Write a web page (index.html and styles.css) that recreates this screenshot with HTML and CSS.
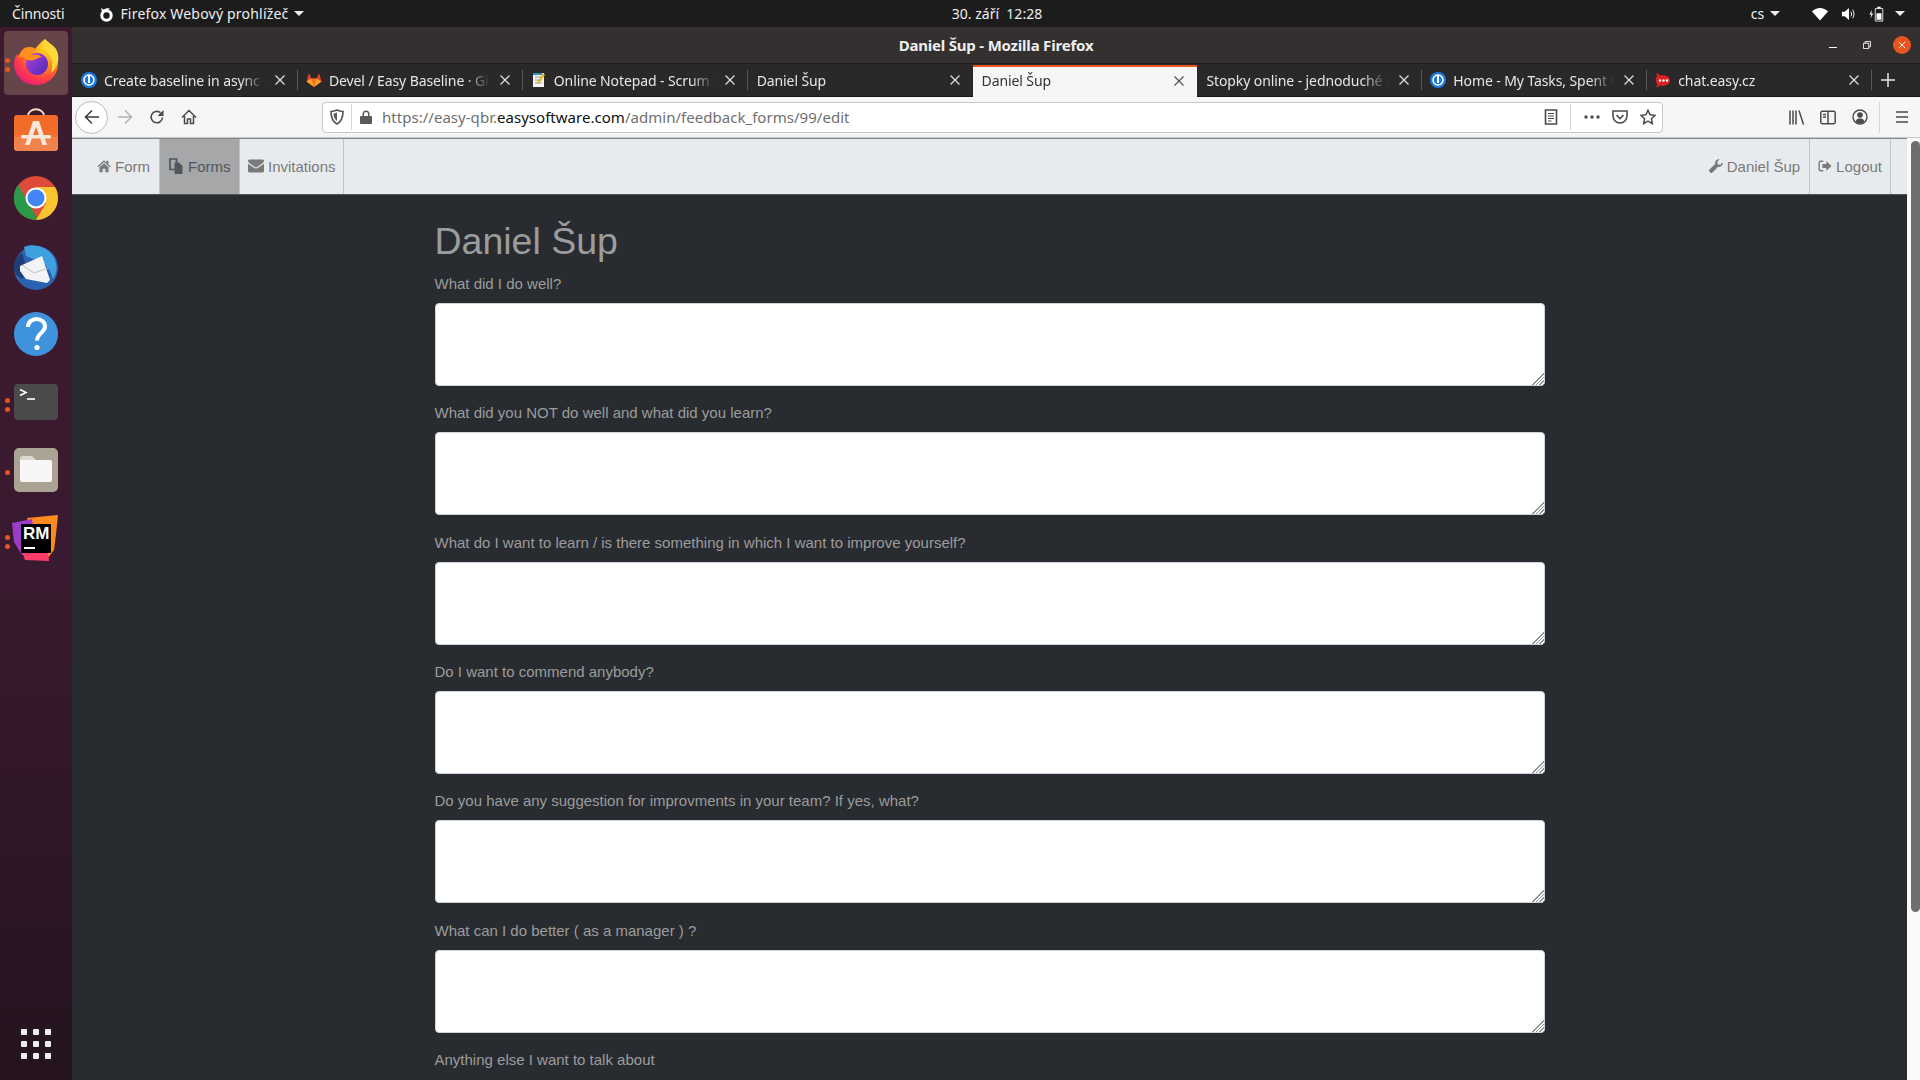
FILE: index.html
```html
<!DOCTYPE html>
<html lang="cs">
<head>
<meta charset="utf-8">
<title>Daniel Šup - Mozilla Firefox</title>
<link rel="stylesheet" href="styles.css">
</head>
<body>
<header class="topbar">
  <span class="activities">Činnosti</span>
  <span class="appmenu">
    <svg class="appicon" viewBox="0 0 16 16"><circle cx="8.500" cy="9.500" r="4.700" fill="none" stroke="#fff" stroke-width="3"/><path fill="#fff" d="M3 1c.5 1.500 1.500 2.300 3 2.500C7.500 2.500 9.500 2 12 2.500 10.500 3 9.800 4 9.500 5.500 7.500 5 5.500 5.500 4.500 7.500 4 6 3.300 3.500 3 1z"/></svg>
    <span>Firefox Webový prohlížeč</span><i class="caret"></i>
  </span>
  <time class="clock">30. září&nbsp; 12:28</time>
  <div class="status">
    <span class="lang">cs <i class="caret"></i></span>
    <svg class="st-wifi" viewBox="0 0 16 14"><path fill="#fff" d="M8 13.500 0 4.500C2.200 2.200 5 1 8 1s5.800 1.200 8 3.500z"/></svg>
    <svg class="st-vol" viewBox="0 0 16 14"><path fill="#fff" d="M1 4.500h3L8.500 .5v13L4 9.500H1z"/><path fill="none" stroke="#fff" d="M10.500 4.500c1 1.500 1 3.500 0 5M12.500 2.500c1.800 2.600 1.800 6.400 0 9"/></svg>
    <svg class="st-bat" viewBox="0 0 18 18"><path fill="#fff" d="M3.500 4 .5 9.500h2.300l-1 5L5 8.500H2.800z"/><path fill="none" stroke="#fff" d="M7.500 2.500h9v15h-9z"/><path fill="#fff" d="M10 .3h4v2.200h-4zM9 8h6v8H9z"/></svg>
    <i class="caret caret-last"></i>
  </div>
</header>

<div class="desktop">
  <nav class="dock">
    <div class="dock-item dock-active">
      <i class="pip pip-a"></i><i class="pip pip-b"></i>
      <svg class="dock-icon" viewBox="0 0 48 48">
        <defs>
          <radialGradient id="ffg" cx=".75" cy=".15" r="1"><stop offset="0" stop-color="#ffe226"/><stop offset=".45" stop-color="#ff8a1c"/><stop offset=".75" stop-color="#ff3a4a"/><stop offset="1" stop-color="#e31587"/></radialGradient>
          <linearGradient id="ffp" x1="0" y1="0" x2="1" y2="1"><stop offset="0" stop-color="#b040d0"/><stop offset="1" stop-color="#4a2bc0"/></linearGradient>
        </defs>
        <path fill="url(#ffg)" d="M33 1c1 4 4 6 7 10 4 5 6 10 6 15 0 12-10 21-22 21C12 47 2 38 2 26c0-4 1-7 3-10l2 2c1-3 3-6 5-8 3-1 7-1 11 1 3-4 6-7 10-10z"/>
        <path fill="#ffd93a" d="M33 1c-3 5-2 9 2 13 5 5 7 12 4 21 7-6 9-14 6-22-2-5-7-7-12-12z"/>
        <circle cx="25" cy="26" r="11" fill="url(#ffp)"/>
        <path fill="#ff8f1f" d="M6 20c2-7 7-11 12-11 3 0 5 1 7 3-3 1-5 3-6 5 4-1 8-1 11 2-3 0-5 2-8 3-4 1-8 0-10-3-2 0-4 0-6 1z"/>
      </svg>
    </div>
    <div class="dock-item">
      <svg class="dock-icon" viewBox="0 0 48 48">
        <defs><linearGradient id="swg" x1="0" y1="0" x2="0" y2="1"><stop offset="0" stop-color="#f26a26"/><stop offset=".6" stop-color="#f26f2c"/><stop offset=".61" stop-color="#f28048"/><stop offset="1" stop-color="#f28450"/></linearGradient></defs>
        <path fill="none" stroke="#f5dcc0" stroke-width="1.800" d="M16 10c0-9 16-9 16 0"/>
        <rect x="2" y="9" width="44" height="36" rx="3" fill="url(#swg)"/>
        <path fill="#f8e8dc" d="M21 15h6l8 24h-4.500L24 21l-6.500 18H13z"/>
        <rect x="9" y="29" width="30" height="3.500" rx="1.500" fill="#f8e8dc"/>
      </svg>
    </div>
    <div class="dock-item">
      <svg class="dock-icon" viewBox="0 0 48 48">
        <circle cx="24" cy="24" r="22" fill="#dd4b39"/>
        <path fill="#2a9a49" d="M24 46A22 22 0 0 1 6 11l11 19 9 16z"/>
        <path fill="#fac52f" d="M24 13h19a22 22 0 0 1-19 33l10-17z"/>
        <circle cx="24" cy="24" r="10.500" fill="#fff"/>
        <circle cx="24" cy="24" r="8.500" fill="#4285f4"/>
      </svg>
    </div>
    <div class="dock-item">
      <svg class="dock-icon" viewBox="0 0 48 48">
        <circle cx="24" cy="26" r="22" fill="#2a62b0"/>
        <path fill="#3fa0e0" d="M12 5c10-5 28 0 32 16 1.500 8-1 13-3 16-2-8-6-13-12-17L14 14z"/>
        <path fill="#1f3f78" d="M2 26c0-7 3-12 8-15l3 9-2 17C5 35 2 31 2 26z"/>
        <path fill="#f3f3f5" d="M8 24 30 14l8 24-3 3-21-4-6-8z"/>
        <path fill="none" stroke="#bcc2cc" stroke-width="1" d="M10 23l12 8 14-5"/>
      </svg>
    </div>
    <div class="dock-item">
      <svg class="dock-icon" viewBox="0 0 48 48">
        <circle cx="24" cy="24" r="22" fill="#3f93dc"/>
        <path fill="none" stroke="#fff" stroke-width="4" d="M16 17c0-5 4-8 8.500-8S33 12 33 16.500c0 6-8 7-8 14"/>
        <circle cx="25" cy="37.500" r="2.600" fill="#fff"/>
      </svg>
    </div>
    <div class="dock-item">
      <i class="pip pip-a"></i><i class="pip pip-b"></i>
      <svg class="dock-icon" viewBox="0 0 48 48">
        <rect x="2" y="6" width="44" height="36" rx="4" fill="#4a4a4a"/>
        <path fill="none" stroke="#fff" stroke-width="1.600" d="M8 11.500l6 3-6 3"/>
        <path fill="none" stroke="#fff" stroke-width="1.600" d="M15 21h8"/>
      </svg>
    </div>
    <div class="dock-item">
      <i class="pip pip-c"></i>
      <svg class="dock-icon" viewBox="0 0 48 48">
        <rect x="2" y="2" width="44" height="44" rx="5" fill="#aba393"/>
        <path fill="#dcd8cf" d="M8 13a3 3 0 0 1 3-3h9l4 4H8z"/>
        <path fill="#f7f6f4" d="M8 14h30a2 2 0 0 1 2 2v18a2 2 0 0 1-2 2H10a2 2 0 0 1-2-2z"/>
      </svg>
    </div>
    <div class="dock-item">
      <i class="pip pip-d"></i><i class="pip pip-e"></i>
      <svg class="dock-icon" viewBox="0 0 48 48">
        <path fill="#ff8a1f" d="M15 4l31-3-2 19-2 16-6 8-10-4z"/>
        <path fill="#9b3cc8" d="M0 9l20-4 4 30-14 6L2 28z"/>
        <path fill="#ff3c6a" d="M8 32l28 6 1 9-24-1z"/>
        <rect x="9" y="10" width="30" height="29" fill="#000"/>
        <text x="11" y="25" class="rm-text">RM</text>
        <rect x="12" y="33" width="11" height="2" fill="#fff"/>
      </svg>
    </div>
    <div class="dock-grid"><i></i><i></i><i></i><i></i><i></i><i></i><i></i><i></i><i></i></div>
  </nav>

  <section class="window">
    <div class="titlebar">
      <span class="title">Daniel Šup - Mozilla Firefox</span>
      <div class="winctl">
        <i class="win-min"></i>
        <svg class="win-max" viewBox="0 0 9 9"><path fill="none" stroke="#fff" d="M.5 2.500h6v6h-6zM2.500 2.500v-2h6v6h-2"/></svg>
        <span class="win-close"><svg viewBox="0 0 10 10"><path stroke="#fff" stroke-width="1.200" d="M1 1l8 8M9 1l-8 8"/></svg></span>
      </div>
    </div>

    <div class="tabstrip">
      <div class="tab sep">
        <svg class="fav" viewBox="0 0 16 16"><circle cx="8" cy="8" r="8" fill="#1a7be0"/><circle cx="8" cy="8" r="5" fill="none" stroke="#fff" stroke-width="1.500"/><path stroke="#fff" stroke-width="2" d="M8 3v8"/></svg>
        <span class="tab-text">Create baseline in async -</span><svg class="tab-x" viewBox="0 0 10 10"><use href="#x"/></svg>
      </div>
      <div class="tab sep">
        <svg class="fav" viewBox="0 0 16 16"><path fill="#e24329" d="M8 15 .5 9.500 3 1l2.500 5.500h5L13 1l2.500 8.500z"/><path fill="#fc6d26" d="M8 15 5.500 6.500h5z"/><path fill="#fca326" d="M.5 9.500 5.500 6.500 8 15zM15.500 9.500 10.500 6.500 8 15z"/></svg>
        <span class="tab-text">Devel / Easy Baseline · Gi</span><svg class="tab-x" viewBox="0 0 10 10"><use href="#x"/></svg>
      </div>
      <div class="tab sep">
        <svg class="fav" viewBox="0 0 16 16"><rect x="2" y="1" width="11" height="14" fill="#f4f4f4"/><path stroke="#999" d="M4 5h7M4 8h7M4 11h7"/><path fill="#e8b820" d="M12 1l2 2-6 8-2 1 .5-2.500z"/><rect x="2" y="1" width="9" height="2" fill="#2f8fc0"/></svg>
        <span class="tab-text">Online Notepad - Scrum n</span><svg class="tab-x" viewBox="0 0 10 10"><use href="#x"/></svg>
      </div>
      <div class="tab">
        <span class="tab-text">Daniel Šup</span><svg class="tab-x" viewBox="0 0 10 10"><use href="#x"/></svg>
      </div>
      <div class="tab tab-active">
        <span class="tab-text">Daniel Šup</span><svg class="tab-x" viewBox="0 0 10 10"><use href="#x"/></svg>
      </div>
      <div class="tab sep">
        <span class="tab-text">Stopky online - jednoduché a</span><svg class="tab-x" viewBox="0 0 10 10"><use href="#x"/></svg>
      </div>
      <div class="tab sep">
        <svg class="fav" viewBox="0 0 16 16"><circle cx="8" cy="8" r="8" fill="#1a7be0"/><circle cx="8" cy="8" r="5" fill="none" stroke="#fff" stroke-width="1.500"/><path stroke="#fff" stroke-width="2" d="M8 3v8"/></svg>
        <span class="tab-text">Home - My Tasks, Spent t</span><svg class="tab-x" viewBox="0 0 10 10"><use href="#x"/></svg>
      </div>
      <div class="tab sep">
        <svg class="fav" viewBox="0 0 16 16"><path fill="#db2323" d="M1 1c2 .5 3 1.500 4 2.500 4-1 10 .5 10 5 0 4.500-6 6-10 5-1 1-2.500 1.500-4 1.500 1-1 1.500-2 1-3.500C0 9.500 0 6 2 4.500 2 3.500 1.500 2 1 1z"/><circle cx="5" cy="8.500" r="1.200" fill="#fff"/><circle cx="8.500" cy="8.500" r="1.200" fill="#fff"/><circle cx="12" cy="8.500" r="1.200" fill="#fff"/></svg>
        <span class="tab-text">chat.easy.cz</span><svg class="tab-x" viewBox="0 0 10 10"><use href="#x"/></svg>
      </div>
      <svg class="newtab" viewBox="0 0 14 14"><path stroke="#e6e6e6" stroke-width="1.500" d="M7 0v14M0 7h14"/></svg>
    </div>

    <div class="toolbar">
      <span class="backbtn"><svg viewBox="0 0 16 16"><path fill="none" stroke="#3a3a3a" stroke-width="1.500" d="M15 8H1.500M8 1.500 1.500 8 8 14.500"/></svg></span>
      <svg class="tool tool-fwd" viewBox="0 0 16 16"><path fill="none" stroke="#b4b4b4" stroke-width="1.500" d="M1 8h13.500M8 1.500 14.500 8 8 14.500"/></svg>
      <svg class="tool tool-reload" viewBox="0 0 16 16"><path fill="none" stroke="#4a4a4a" stroke-width="1.600" d="M13.500 8.500a5.700 5.700 0 1 1-2-4.800"/><path fill="#4a4a4a" d="M14.500 1v6h-6z"/></svg>
      <svg class="tool tool-home" viewBox="0 0 16 16"><path fill="none" stroke="#4a4a4a" stroke-width="1.500" d="M1 8.500 8 1.500l7 7M3.500 7v7.500h3V10h3v4.500h3V7"/></svg>
      <div class="urlbar">
        <svg class="u-shield" viewBox="0 0 14 16"><path fill="none" stroke="#5a5a5a" stroke-width="1.700" d="M7 1c2 1 4 1.400 6 1.500 0 6-1.500 10-6 12.500C2.500 12.500 1 8.500 1 2.500 3 2.400 5 2 7 1z"/><path fill="#5a5a5a" d="M7 3.500v8.500C5 10.500 3.800 8.500 3.500 4.500 5 4.400 6 4 7 3.500z"/></svg>
        <i class="u-sep"></i>
        <svg class="u-lock" viewBox="0 0 12 14"><path fill="#5a5a5a" d="M1 6h1.500V4a3.500 3.500 0 0 1 7 0v2H11a1 1 0 0 1 1 1v6a1 1 0 0 1-1 1H1a1 1 0 0 1-1-1V7a1 1 0 0 1 1-1zm3 0h4V4a2 2 0 0 0-4 0z"/></svg>
        <span class="url">https://easy-qbr.<b>easysoftware.com</b>/admin/feedback_forms/99/edit</span>
        <svg class="u-reader" viewBox="0 0 14 16"><path fill="none" stroke="#4a4a4a" stroke-width="1.600" d="M1.500 1h11v14h-11z"/><path stroke="#4a4a4a" stroke-width="1.200" d="M4 4.500h6M4 7h6M4 9.500h6M4 12h3.500"/></svg>
        <i class="u-sep u-sep-r"></i>
        <svg class="u-dots" viewBox="0 0 16 4"><circle cx="2" cy="2" r="1.700" fill="#4a4a4a"/><circle cx="8" cy="2" r="1.700" fill="#4a4a4a"/><circle cx="14" cy="2" r="1.700" fill="#4a4a4a"/></svg>
        <svg class="u-pocket" viewBox="0 0 16 14"><path fill="none" stroke="#4a4a4a" stroke-width="1.600" d="M1 1h14v5a7 7 0 0 1-14 0z"/><path fill="none" stroke="#4a4a4a" stroke-width="1.600" d="M4.500 5 8 8.500 11.500 5"/></svg>
        <svg class="u-star" viewBox="0 0 16 16"><path fill="none" stroke="#4a4a4a" stroke-width="1.500" d="M8 1.200l2.100 4.500 4.900.6-3.600 3.400.9 4.900L8 12.200l-4.300 2.400.9-4.900L1 6.300l4.900-.6z"/></svg>
      </div>
      <div class="tools-right">
        <svg class="tr-lib" viewBox="0 0 16 14"><path stroke="#4a4a4a" stroke-width="1.500" d="M1 0v14M4 0v14M7 0v14M10 0l4.500 14"/></svg>
        <svg class="tr-side" viewBox="0 0 16 14"><path fill="none" stroke="#4a4a4a" stroke-width="1.500" d="M2.500.8h11a1.700 1.700 0 0 1 1.700 1.700v9a1.700 1.700 0 0 1-1.700 1.700h-11A1.700 1.700 0 0 1 .8 11.500v-9A1.700 1.700 0 0 1 2.500.8zM8 .8v12.400M3 4h3M3 6.500h3"/></svg>
        <svg class="tr-acct" viewBox="0 0 16 16"><circle cx="8" cy="8" r="7" fill="none" stroke="#4a4a4a" stroke-width="1.400"/><circle cx="8" cy="6" r="2.800" fill="#4a4a4a"/><path fill="#4a4a4a" d="M3.500 12.500C4.500 10 6 9.500 8 9.500s3.500.5 4.500 3C11 14 9.500 14.500 8 14.500s-3-.5-4.500-2z"/></svg>
        <i class="tr-sep"></i>
        <svg class="tr-menu" viewBox="0 0 14 12"><path stroke="#4a4a4a" stroke-width="1.600" d="M1 1h12M1 6h12M1 11h12"/></svg>
      </div>
    </div>

    <div class="viewport">
      <div class="page">
        <div class="navbar">
          <a class="nav-link nav-home">
            <svg class="ni" viewBox="0 0 16 14"><path fill="currentColor" d="M8 .5 .5 7.200l1 1.100L8 2.500l6.500 5.800 1-1.100L13 5V1h-2.200v2.100zM2.800 8.500V14h3.700v-3.800h3V14h3.700V8.500L8 3.800z"/></svg>Form</a>
          <a class="nav-link nav-active">
            <svg class="ni ni-wide" viewBox="0 0 14 16"><path fill="none" stroke="currentColor" stroke-width="1.700" d="M1 1h6.500v10.500H1z"/><path fill="currentColor" stroke="currentColor" d="M6 5h4l3 3v7.500H6z"/></svg>Forms</a>
          <a class="nav-link nav-inv">
            <svg class="ni ni-wide" viewBox="0 0 16 13"><path fill="currentColor" d="M1.500 0h13A1.500 1.500 0 0 1 16 1.500c0 1-.8 1.800-1.500 2.300L9.200 7.400c-.8.600-1.600.6-2.400 0L1.500 3.800C.8 3.300 0 2.500 0 1.500A1.500 1.500 0 0 1 1.500 0zM0 4.200 6 8.300c1.200.9 2.800.9 4 0l6-4.100v7.300a1.500 1.500 0 0 1-1.500 1.500h-13A1.500 1.500 0 0 1 0 11.500z"/></svg>Invitations</a>
          <a class="nav-link nav-user">
            <svg class="ni" viewBox="0 0 14 14"><path fill="currentColor" d="M13.700 3.300c.3 1.200 0 2.600-1 3.500-1 1-2.300 1.300-3.500 1L3.500 13.500a1.600 1.600 0 0 1-2.200 0l-.8-.8a1.600 1.600 0 0 1 0-2.200L6.200 4.800c-.3-1.200 0-2.500 1-3.500 1-1 2.300-1.300 3.500-1L8.300 2.700l.4 2.600 2.600.4z"/></svg>Daniel Šup</a>
          <a class="nav-link nav-logout">
            <svg class="ni" viewBox="0 0 16 14"><path fill="none" stroke="currentColor" stroke-width="1.600" d="M6 1.500H3A1.700 1.700 0 0 0 1.300 3.200v7.600A1.700 1.700 0 0 0 3 12.500h3"/><path fill="currentColor" d="M5 4.700h4.500V1.500L15.500 7l-6 5.500V9.300H5z"/></svg>Logout</a>
        </div>
        <main class="content">
          <h1 class="heading">Daniel Šup</h1>
          <div class="field"><label class="lbl">What did I do well?</label><textarea class="ta"></textarea></div>
          <div class="field"><label class="lbl">What did you NOT do well and what did you learn?</label><textarea class="ta"></textarea></div>
          <div class="field"><label class="lbl">What do I want to learn / is there something in which I want to improve yourself?</label><textarea class="ta"></textarea></div>
          <div class="field"><label class="lbl">Do I want to commend anybody?</label><textarea class="ta"></textarea></div>
          <div class="field"><label class="lbl">Do you have any suggestion for improvments in your team? If yes, what?</label><textarea class="ta"></textarea></div>
          <div class="field"><label class="lbl">What can I do better ( as a manager ) ?</label><textarea class="ta"></textarea></div>
          <div class="field"><label class="lbl">Anything else I want to talk about</label></div>
        </main>
      </div>
      <div class="scrolltrack"><div class="scrollthumb"></div></div>
    </div>
  </section>
</div>
<svg class="defs" width="0" height="0"><defs><symbol id="x" viewBox="0 0 10 10"><path stroke="currentColor" stroke-width="1.300" d="M.5.500l9 9M9.500.5l-9 9"/></symbol></defs></svg>
</body>
</html>
```

FILE: styles.css
```css
* { box-sizing: border-box; }
html, body { margin: 0; height: 100%; overflow: hidden; }
body {
  width: 1920px; height: 1080px;
  display: flex; flex-direction: column;
  font-family: "Noto Sans", sans-serif;
  background: #282b30;
  position: relative;
}
i { display: block; }
.defs { position: absolute; }

/* top bar */
.topbar {
  height: 27px; flex: none; background: #1c1c1c; color: #eee;
  display: flex; align-items: center; font-size: 14px; letter-spacing: -.15px;
  position: relative;
}
.activities { margin-left: 12px; }
.appmenu { margin-left: 34px; display: flex; align-items: center; letter-spacing: .2px; }
.appicon { width: 16px; height: 16px; margin-right: 6px; }
.caret {
  width: 0; height: 0; border: 5px solid transparent; border-top: 5px solid #eee; border-bottom: 0;
  display: inline-block; margin-left: 5px;
}
.clock { position: absolute; left: 951px; width: 92px; text-align: center; letter-spacing: 0; }
.status { margin-left: auto; display: flex; align-items: center; padding-right: 15px; }
.lang { display: flex; align-items: center; margin-right: 32px; }
.lang .caret { margin-left: 6px; }
.st-wifi { width: 16px; height: 14px; margin-right: 13px; }
.st-vol { width: 15px; height: 14px; margin-right: 13px; }
.st-bat { width: 15px; height: 16px; }
.caret-last { margin-left: 11px; }

/* layout */
.desktop { flex: 1; display: flex; min-height: 0; }
.dock {
  width: 72px; flex: none;
  background: linear-gradient(180deg, #3d1a2e 0%, #3a1a30 50%, #24131f 100%);
  display: flex; flex-direction: column; padding-top: 1px;
}
.dock-item {
  height: 68px; flex: none; position: relative;
  display: flex; align-items: center; justify-content: center;
}
.dock-active::before {
  content: ""; position: absolute; left: 4px; top: 3px; width: 64px; height: 64px;
  background: #664548; border-radius: 4px;
}
.dock-icon { width: 48px; height: 48px; position: relative; }
.pip { position: absolute; left: 5px; width: 5px; height: 5px; border-radius: 50%; background: #e95420; z-index: 1; }
.pip-a { top: 30px; }
.pip-b { top: 39px; }
.pip-c { top: 34px; }
.pip-d { top: 31px; }
.pip-e { top: 40px; }
.rm-text { font: 700 17px "Liberation Sans", sans-serif; fill: #fff; }
.dock-grid {
  margin-top: auto; margin-bottom: 21px; align-self: center;
  display: grid; grid-template-columns: repeat(3, 6px); gap: 6px;
}
.dock-grid i { width: 6px; height: 6px; background: #eee; border-radius: 1px; }

/* window */
.window { flex: 1; min-width: 0; display: flex; flex-direction: column; }
.titlebar {
  height: 37px; flex: none; background: #33302f; border-bottom: 1px solid #1f1d1d;
  position: relative; display: flex; align-items: center; justify-content: center;
}
.title { color: #eee; font-size: 15px; font-weight: 700; letter-spacing: -.2px; }
.winctl { position: absolute; right: 0; top: 0; height: 36px; display: flex; align-items: center; }
.win-min { width: 8px; height: 1px; background: #fff; margin-right: 26px; margin-top: 5px; }
.win-max { width: 8px; height: 8px; margin-right: 22px; }
.win-close {
  width: 18px; height: 18px; border-radius: 50%; background: #e95420; margin-right: 9px;
  display: flex; align-items: center; justify-content: center;
}
.win-close svg { width: 8px; height: 8px; }

.tabstrip {
  height: 33px; flex: none; background: #2a2828; border-bottom: 1px solid #161616;
  display: flex; align-items: stretch; padding-left: 1px;
}
.tab {
  width: 224.9px; flex: none; display: flex; align-items: center; color: #e6e6e6;
  padding: 0 5px 0 8px; font-size: 14px; letter-spacing: -.1px; position: relative;
}
.tab.sep::after {
  content: ""; position: absolute; right: 0; top: 6px; bottom: 6px; width: 1px; background: #5a5858;
}
.tab-active { background: #f5f6f7; color: #333; border-top: 2px solid #e95420; margin-top: 1px; margin-bottom: -1px; padding-bottom: 3px; }
.fav { width: 16px; height: 16px; flex: none; margin-right: 7px; }
.tab-text {
  flex: 1; min-width: 0; white-space: nowrap; overflow: hidden;
  -webkit-mask-image: linear-gradient(90deg, #000 85%, transparent 100%);
  mask-image: linear-gradient(90deg, #000 85%, transparent 100%);
}
.tab-text:first-child { margin-left: 1px; }
.tab-x { width: 10px; height: 10px; flex: none; margin-left: 10px; margin-right: 8px; color: #dcdcdc; }
.tab-active .tab-x { color: #555; }
.newtab { width: 14px; height: 14px; align-self: center; margin-left: 9px; }

.toolbar {
  height: 41px; flex: none; background: #f5f6f7; border-bottom: 1px solid #c6c6c6;
  display: flex; align-items: center; position: relative;
}
.backbtn {
  width: 33px; height: 33px; border: 1px solid #bbb; border-radius: 50%; background: #fff; margin-left: 3px;
  display: flex; align-items: center; justify-content: center; flex: none;
}
.backbtn svg { width: 16px; height: 16px; }
.tool { width: 16px; height: 16px; flex: none; }
.tool-fwd { margin-left: 9px; }
.tool-reload { margin-left: 16px; }
.tool-home { margin-left: 16px; }
.urlbar {
  margin-left: 125px; width: 1341px; height: 31px; flex: none; background: #fff;
  border: 1px solid #c8c8c8; border-radius: 4px;
  display: flex; align-items: center; position: relative;
}
.u-shield { width: 14px; height: 16px; margin-left: 7px; flex: none; }
.u-sep { width: 1px; height: 26px; background: #d6d6d6; margin-left: 7px; flex: none; }
.u-lock { width: 12px; height: 14px; margin-left: 8px; flex: none; }
.url { margin-left: 10px; font-size: 15px; color: #6f6f6f; letter-spacing: .03px; flex: 1; }
.url b { font-weight: 400; color: #111; }
.u-reader { width: 14px; height: 16px; flex: none; }
.u-sep-r { margin-left: 12px; }
.u-dots { width: 16px; height: 4px; margin-left: 13px; flex: none; }
.u-pocket { width: 16px; height: 14px; margin-left: 12px; flex: none; }
.u-star { width: 16px; height: 16px; margin-left: 12px; margin-right: 6px; flex: none; }
.tools-right { display: flex; align-items: center; margin-left: 126px; }
.tr-lib { width: 16px; height: 15px; }
.tr-side { width: 16px; height: 15px; margin-left: 15px; }
.tr-acct { width: 16px; height: 16px; margin-left: 16px; }
.tr-sep { width: 1px; height: 31px; background: #d6d6d6; margin-left: 11px; }
.tr-menu { width: 14px; height: 12px; margin-left: 15px; }

/* page */
.viewport { flex: 1; min-height: 0; display: flex; }
.page { flex: 1; min-width: 0; background: #282b30; overflow: hidden; font-family: "Liberation Sans", sans-serif; }
.scrolltrack { width: 13px; flex: none; background: #fafafa; padding: 3px 0 0 4px; }
.scrollthumb { height: 771px; background: #6e6e6e; border-radius: 5px; }

.navbar {
  height: 57px; background: #e8ebee; border-top: 1px solid #888; border-bottom: 1px solid #555;
  display: flex; align-items: stretch; padding-left: 16px; font-size: 15px; color: #7a7a7a;
}
.nav-link {
  display: flex; align-items: center; padding: 0 8px 1px; border-right: 1px solid #bfc3c7; color: #7a7a7a;
}
.nav-home { width: 72px; padding-left: 9px; }
.nav-active { width: 80px; background: #a5a7a8; color: #50565c; }
.nav-inv { width: 104px; }
.nav-user { margin-left: auto; padding-right: 9px; }
.nav-logout { margin-right: 16px; }
.ni { width: 14px; height: 14px; margin-right: 4px; flex: none; }
.ni-wide { width: 16px; height: 16px; }

.content { width: 1110px; margin: 0 auto; color: #9c9c9c; }
.heading { font-size: 37.500px; font-weight: 400; line-height: 46px; margin: 23px 0 9px; color: #9c9c9c; }
.field { height: 129.330px; }
.lbl { display: block; font-size: 15px; line-height: 22px; margin: 0 0 8px; }
.ta {
  display: block; width: 100%; height: 83px; background: #fff;
  border: 1px solid #ced4da; border-radius: 4px; margin: 0; padding: 6px 12px; outline: 0;
}
.ta::-webkit-resizer {
  background:
    linear-gradient(135deg, #fff 58%, transparent 58%),
    repeating-linear-gradient(135deg, #8f8f8f 0 1px, #fff 1px 2.500px);
}
```
